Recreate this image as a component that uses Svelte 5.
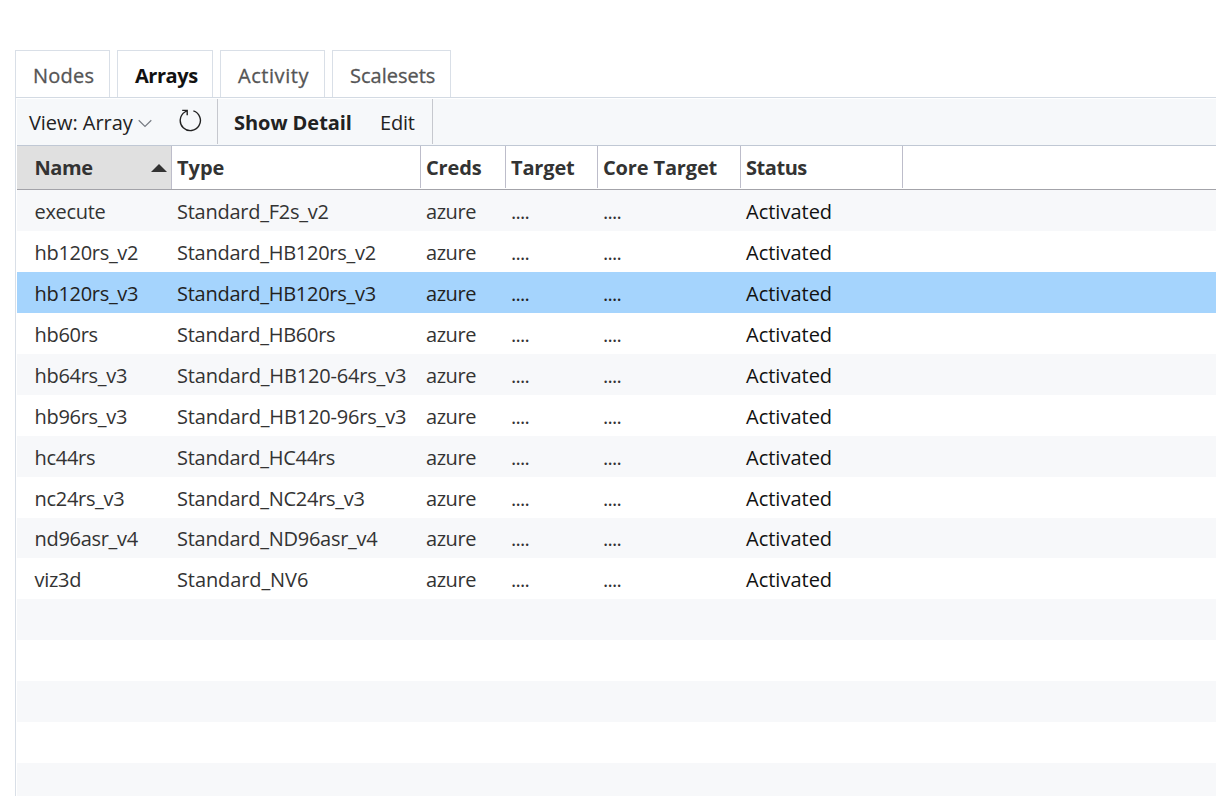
<script>
  const tabs = ['Nodes', 'Arrays', 'Activity', 'Scalesets'];
  const columns = ['Name', 'Type', 'Creds', 'Target', 'Core Target', 'Status'];
  const arrays = [
    ['execute', 'Standard_F2s_v2'],
    ['hb120rs_v2', 'Standard_HB120rs_v2'],
    ['hb120rs_v3', 'Standard_HB120rs_v3'],
    ['hb60rs', 'Standard_HB60rs'],
    ['hb64rs_v3', 'Standard_HB120-64rs_v3'],
    ['hb96rs_v3', 'Standard_HB120-96rs_v3'],
    ['hc44rs', 'Standard_HC44rs'],
    ['nc24rs_v3', 'Standard_NC24rs_v3'],
    ['nd96asr_v4', 'Standard_ND96asr_v4'],
    ['viz3d', 'Standard_NV6']
  ];
  const emptyRows = [0, 1, 2, 3, 4];
  let selected = $state('hb120rs_v3');
  let active = $state('Arrays');
</script>

<main>
  <nav>
    {#each tabs as tab}
      <button class="tab {tab.toLowerCase()}" class:active={tab === active} onclick={() => (active = tab)}><span>{tab}</span></button>
    {/each}
  </nav>
  <section>
    <div class="toolbar">
      <div class="group view">
        <span class="label">View: Array</span>
        <svg class="chevron" width="14" height="9" viewBox="0 0 14 9"><path d="M.7 1.2 7 7.4l6.3-6.2" /></svg>
        <svg class="refresh" width="24" height="24" viewBox="0 0 24 24"><path d="M15.4 2.9A10.1 10.1 0 1 1 6.9 4L9.2 2.4M4.2 2.4h5v4.8" /></svg>
      </div>
      <div class="group actions">
        <strong>Show Detail</strong>
        <span class="edit">Edit</span>
      </div>
    </div>
    <div class="grid header">
      {#each columns as column, i}
        <div class="cell h{i}" class:sorted={i === 0}>
          <span>{column}</span>
          {#if i === 0}<svg width="16" height="8" viewBox="0 0 16 8"><path d="M0 8 8 0l8 8z" /></svg>{/if}
        </div>
      {/each}
    </div>
    <div class="rows">
      {#each arrays as [name, type]}
        <div class="grid row" class:selected={name === selected}>
          <div class="cell name"><span>{name}</span></div>
          <div class="cell type" class:long={type.length > 20} class:short={type.length < 13}><span>{type}</span></div>
          <div class="cell creds"><span>azure</span></div>
          <div class="cell dots"><span>....</span></div>
          <div class="cell dots"><span>....</span></div>
          <div class="cell status"><span>Activated</span></div>
        </div>
      {/each}
      {#each emptyRows as row (row)}
        <div class="grid row"></div>
      {/each}
    </div>
  </section>
</main>

<style>
  :global(body) { background: #fff; overflow: hidden; }
  main {
    box-sizing: border-box;
    height: 796px;
    padding: 50px 0 0 15px;
    overflow: hidden;
    display: flex;
    flex-direction: column;
    font: 400 20px/28px "Open Sans", "Noto Sans", sans-serif;
    color: #333;
    white-space: nowrap;
  }
  nav { display: flex; gap: 7px; height: 47px; flex: none; }
  .tab {
    box-sizing: border-box;
    border: 1px solid #d9dfe7;
    border-bottom: 0;
    background: #fff;
    padding: 3px 0 0 17px;
    font: inherit;
    color: #555;
    text-align: left;
    -webkit-text-stroke: .3px currentColor;
  }
  .nodes { width: 95px; letter-spacing: .25px; }
  .arrays { width: 96px; letter-spacing: -.45px; }
  .activity { width: 105px; letter-spacing: .55px; }
  .scalesets { width: 119px; }
  .tab.active { color: #111; font-weight: 700; -webkit-text-stroke: 0; }
  section { flex: 1; border-top: 1px solid #d3dae3; border-left: 1px solid #d9dfe7; padding: 1px 0 0 1px; }
  .toolbar { display: flex; height: 46px; background: #f6f8fa; border-bottom: 1px solid #c0c8d4; color: #222; }
  .group { box-sizing: border-box; height: 45px; display: flex; align-items: center; border-right: 1px solid #c6c8ce; padding-top: 3px; }
  .view { width: 201px; padding-left: 12px; }
  .label { width: 104px; letter-spacing: -.05px; }
  .actions { width: 215px; padding-left: 16px; }
  .actions strong { width: 146px; letter-spacing: -.05px; }
  .edit { letter-spacing: -.2px; }
  svg { flex: none; fill: none; }
  .chevron { margin: 1px 0 0 5px; stroke: #777c84; stroke-width: 1.2; }
  .refresh { margin: -6px 0 0 26px; stroke: #222; stroke-width: 1.4; }
  .grid { display: grid; grid-template-columns: 155px 249px 85px 92px 143px 162px 1fr; }
  .header { height: 43px; border-bottom: 1px solid #a3a3a9; font-weight: 700; letter-spacing: -.15px; }
  .cell { box-sizing: border-box; display: flex; align-items: center; padding: 2px 0 0 5px; }
  .cell:first-child { padding-left: 17.5px; }
  .header .cell { border-right: 1px solid #bdbdca; margin-bottom: 1px; padding-top: 2px; }
  .header .sorted { background: #e0e0e0; justify-content: space-between; padding-top: 0; padding-right: 4px; margin-bottom: 0; letter-spacing: -.4px; }
  .header .h1 { letter-spacing: 0; }
  .header .h5 { letter-spacing: -.45px; }
  .header svg { fill: #333; }
  .row { height: 41px; background: #fff; }
  .row:nth-child(9) { height: 40px; }
  .row:nth-child(odd) { background: #f7f8fa; }
  .row.selected { background: #a5d4fd; color: #222; }
  .name { letter-spacing: -.3px; }
  .type { letter-spacing: -.26px; }
  .type.long { letter-spacing: -.18px; }
  .type.short { letter-spacing: -.1px; }
  .creds { letter-spacing: -.45px; }
  .dots { letter-spacing: -.75px; }
  .status { color: #111; }
</style>
